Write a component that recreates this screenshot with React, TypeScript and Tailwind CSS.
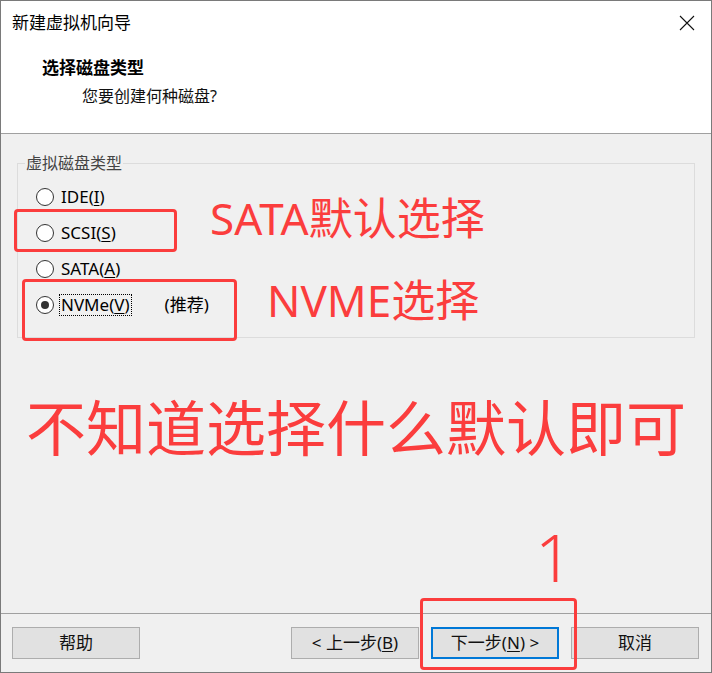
import React, { useState } from 'react';

type DiskType = 'ide' | 'scsi' | 'sata' | 'nvme';

interface DiskOption {
  id: DiskType;
  label: string;
  key: string;
  note?: string;
}

const options: DiskOption[] = [
  { id: 'ide', label: 'IDE', key: 'I' },
  { id: 'scsi', label: 'SCSI', key: 'S' },
  { id: 'sata', label: 'SATA', key: 'A' },
  { id: 'nvme', label: 'NVMe', key: 'V', note: '(推荐)' },
];

const FONT = "font-['Noto_Sans','Noto_Sans_CJK_SC',sans-serif]";

const RadioDot = ({ checked }: { checked: boolean }) => (
  <span className="flex h-[18px] w-[18px] items-center justify-center rounded-full border border-[#333333] bg-white">
    {checked && <span className="h-[8px] w-[8px] rounded-full bg-[#333333]" />}
  </span>
);

const WizButton = ({ children, primary }: { children: React.ReactNode; primary?: boolean }) => (
  <button
    className={`flex h-[32px] w-[128px] items-center justify-center bg-[#e1e1e1] text-[17px] text-[#111] ${
      primary ? 'border-2 border-[#0078d7]' : 'border border-[#adadad]'
    }`}
  >
    {children}
  </button>
);

export default function App() {
  const [selected, setSelected] = useState<DiskType>('nvme');

  return (
    <div className={`relative flex h-[673px] w-[712px] flex-col border border-[#7a7a7a] bg-[#f0f0f0] ${FONT}`}>
      {/* Header */}
      <div className="flex h-[133px] flex-col border-b border-[#a0a0a0] bg-white">
        <div className="flex h-[44px] items-center justify-between pl-[11px] pr-[16px]">
          <span className="text-[17px] text-black">新建虚拟机向导</span>
          <svg width="16" height="16" viewBox="0 0 16 16" className="mt-[-1px]">
            <path d="M1 1 L15 15 M15 1 L1 15" stroke="#111" strokeWidth="1.1" />
          </svg>
        </div>
        <div className="pl-[41px] pt-[11px] text-[17px] font-bold leading-[24px] text-black">选择磁盘类型</div>
        <div className="pl-[81px] pt-[4px] text-[16px] leading-[24px] text-[#111]">您要创建何种磁盘?</div>
      </div>

      {/* Body */}
      <div className="flex-1 px-[16px] pt-[17px]">
        <fieldset className="border border-[#dcdcdc] pb-[14px] pt-[4px]">
          <legend className="ml-[7px] px-[1px] text-[16px] leading-[24px] text-[#444]">虚拟磁盘类型</legend>
          <div className="pl-[18px]">
            {options.map((opt) => (
              <div
                key={opt.id}
                className="flex h-[36px] cursor-default items-center"
                onClick={() => setSelected(opt.id)}
              >
                <RadioDot checked={selected === opt.id} />
                <span
                  className={`ml-[6px] px-[1px] text-[17px] leading-[20px] text-black ${
                    selected === opt.id ? 'outline outline-1 outline-dotted outline-black' : ''
                  }`}
                >
                  {opt.label}(<span className="underline underline-offset-2">{opt.key}</span>)
                </span>
                {opt.note && <span className="ml-[34px] text-[17px] text-black">{opt.note}</span>}
              </div>
            ))}
          </div>
        </fieldset>
      </div>

      {/* Footer */}
      <div className="flex h-[59px] border-t border-[#a0a0a0] pl-[11px] pr-[12px] pt-[13px]">
        <WizButton>帮助</WizButton>
        <div className="flex-1" />
        <div className="flex gap-[12px]">
          <WizButton>&lt; 上一步(<span className="underline underline-offset-2">B</span>)</WizButton>
          <WizButton primary>
            下一步(<span className="underline underline-offset-2">N</span>) &gt;
          </WizButton>
          <WizButton>取消</WizButton>
        </div>
      </div>

      {/* Annotations */}
      <div className="pointer-events-none absolute left-[13px] top-[208px] h-[43px] w-[163px] rounded-[4px] border-[3px] border-[#fb3d3d]" />
      <div className="pointer-events-none absolute left-[21px] top-[278px] h-[62px] w-[215px] rounded-[4px] border-[3px] border-[#fb3d3d]" />
      <div className="pointer-events-none absolute left-[419px] top-[597px] h-[72px] w-[157px] rounded-[4px] border-[3px] border-[#fb3d3d]" />
      <div className="pointer-events-none absolute left-[209px] top-[195px] text-[44px] leading-none text-[#fb3d3d]">SATA默认选择</div>
      <div className="pointer-events-none absolute left-[266px] top-[277px] text-[44px] leading-none text-[#fb3d3d]">NVME选择</div>
      <div className="pointer-events-none absolute left-[25px] top-[397px] text-[60px] leading-none text-[#fb3d3d]">不知道选择什么默认即可</div>
      <div className="pointer-events-none absolute left-[534px] top-[522px] text-[66px] font-light leading-none text-[#fb3d3d]">1</div>
    </div>
  );
}
